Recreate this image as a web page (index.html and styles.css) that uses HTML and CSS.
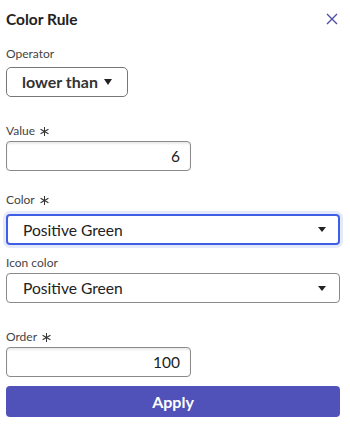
FILE: index.html
```html
<!DOCTYPE html>
<html>
<head>
<meta charset="utf-8">
<link rel="stylesheet" href="styles.css">
</head>
<body>
<div class="panel">
  <div class="header">
    <h1 class="title">Color Rule</h1>
    <button class="close" aria-label="Close">
      <svg width="12" height="12" viewBox="0 0 12 12"><path d="M1 1 L11 11 M11 1 L1 11" stroke="#4b4fa8" stroke-width="1.4" fill="none"/></svg>
    </button>
  </div>

  <div class="field f-operator">
    <div class="label">Operator</div>
    <button class="dropdown-btn">lower than <span class="caret"></span></button>
  </div>

  <div class="field f-value">
    <div class="label">Value <svg class="req" width="11" height="11" viewBox="0 0 12 12"><path d="M6 1 V11 M1.7 3.5 L10.3 8.5 M10.3 3.5 L1.7 8.5" stroke="#333" stroke-width="1.1" fill="none"/></svg></div>
    <div class="input short">6</div>
  </div>

  <div class="field f-color">
    <div class="label">Color <svg class="req" width="11" height="11" viewBox="0 0 12 12"><path d="M6 1 V11 M1.7 3.5 L10.3 8.5 M10.3 3.5 L1.7 8.5" stroke="#333" stroke-width="1.1" fill="none"/></svg></div>
    <div class="select focused">Positive Green <span class="caret"></span></div>
  </div>

  <div class="field f-icon">
    <div class="label">Icon color</div>
    <div class="select">Positive Green <span class="caret"></span></div>
  </div>

  <div class="field f-order">
    <div class="label">Order <svg class="req" width="11" height="11" viewBox="0 0 12 12"><path d="M6 1 V11 M1.7 3.5 L10.3 8.5 M10.3 3.5 L1.7 8.5" stroke="#333" stroke-width="1.1" fill="none"/></svg></div>
    <div class="input short">100</div>
  </div>

  <button class="apply">Apply</button>
</div>
</body>
</html>
```

FILE: styles.css
```css
* { box-sizing: border-box; }
html, body { margin: 0; padding: 0; background: #fff; }
body { font-family: Lato, "Open Sans", sans-serif; color: #222; }

.panel { width: 350px; padding: 0 10px 0 6px; }

.header {
  display: flex;
  justify-content: space-between;
  align-items: center;
  height: 38px;
}
.title {
  margin: 0;
  font-size: 15.5px;
  font-weight: 700;
  color: #222;
}
.close {
  border: 0;
  background: none;
  padding: 0;
  width: 12px;
  height: 12px;
  display: flex;
  margin-right: 2px;
}

.field { display: flex; flex-direction: column; align-items: flex-start; }
.label {
  font-size: 12px;
  line-height: 16px;
  color: #444;
  display: flex;
  align-items: center;
  gap: 4px;
  margin-bottom: 2px;
}
.req { display: block; }

.f-operator { margin-top: 7.5px; }
.f-operator .label { margin-bottom: 5.5px; }
.f-value { margin-top: 26px; }
.f-color { margin-top: 21px; }
.f-color .label { margin-bottom: 6px; }
.f-icon { margin-top: 10px; }
.f-order { margin-top: 26px; }

.dropdown-btn {
  height: 30px;
  width: 122px;
  border: 1px solid #777;
  border-radius: 5px;
  background: #fff;
  font-family: inherit;
  font-size: 16px;
  font-weight: 700;
  color: #333;
  display: flex;
  align-items: center;
  justify-content: center;
  gap: 6px;
  padding: 0 0 1px 0;
}

.caret {
  width: 0; height: 0;
  border-left: 4.5px solid transparent;
  border-right: 4.5px solid transparent;
  border-top: 6px solid #222;
  display: inline-block;
}

.input {
  height: 30px;
  border: 1px solid #8a8a8a;
  border-radius: 4px;
  box-shadow: inset 0 2px 2px rgba(0,0,0,0.08);
  font-size: 15.5px;
  color: #222;
  display: flex;
  align-items: center;
  justify-content: flex-end;
  padding: 0 10px;
}
.short { width: 185px; }

.select {
  width: 334px;
  height: 30px;
  border: 1px solid #8a8a8a;
  border-radius: 4px;
  font-size: 15.6px;
  color: #222;
  display: flex;
  align-items: center;
  justify-content: space-between;
  padding: 0 13px 0 16px;
}
.select .caret { border-left-width: 4px; border-right-width: 4px; border-top-width: 5px; }
.select.focused {
  height: 31px;
  border: 2px solid #3f5ee6;
  padding-left: 15px;
  padding-right: 12px;
  box-shadow: 0 0 0 3px #e6e9fa;
}

.apply {
  margin-top: 9px;
  width: 334px;
  height: 31px;
  border: 0;
  border-radius: 4px;
  background: #5052b9;
  color: #fff;
  font-family: inherit;
  font-size: 16px;
  font-weight: 700;
  padding: 0;
}
```
